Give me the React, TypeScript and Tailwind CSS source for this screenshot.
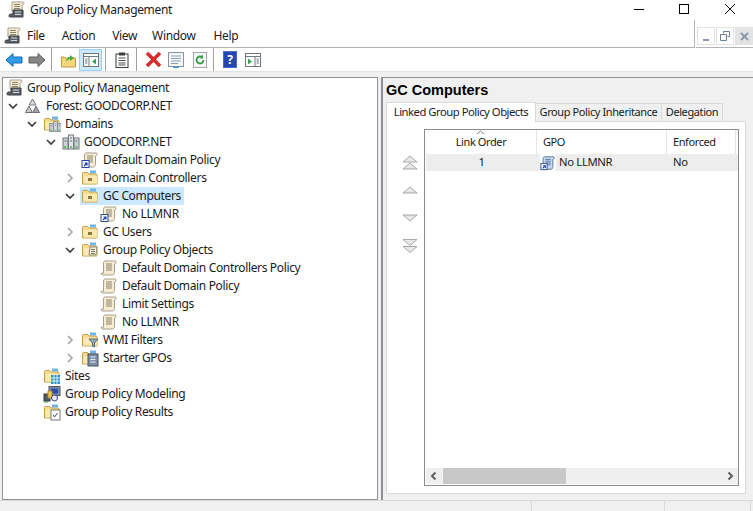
import React from "react";

const Scroll = ({ badge, dark, size = 18 }: { badge?: boolean; dark?: boolean; size?: number }) => (
  <svg width={size} height={size} viewBox="0 0 18 18" className="shrink-0">
    <path d="M5 2h10c1 0 1.500 .8 1 1.800L14.500 5v8.500c0 1-.8 2.500-2 2.500H3c-1.200 0-2-.8-2-1.800h2.500V4C3.500 3 4 2 5 2z" fill={dark ? "#c9d8ea" : "#f6ecd2"} stroke={dark ? "#4d6f9e" : "#a5a08c"} strokeWidth="1" />
    <path d="M6 5h6M6 7h6M6 9h6M6 11h6" stroke={dark ? "#4d6f9e" : "#8a846e"} strokeWidth="1" />
    {badge && <rect x="1" y="9.500" width="7" height="7" fill="#fff" stroke="#2d4a9a" />}
    {badge && <path d="M3 15l3-3M3.500 12H6v2.500" stroke="#1c3fa8" strokeWidth="1.200" fill="none" />}
  </svg>
);

const GpmIcon = () => (
  <svg width="18" height="18" viewBox="0 0 18 18" className="shrink-0">
    <path d="M4 1h11c1 0 1.200 1 .8 1.700L14 4v6H4z" fill="#f6ecd2" stroke="#a5a08c" />
    <path d="M6 3.500h6M6 5.500h6M6 7.500h6" stroke="#8a846e" />
    <path d="M1 15c0-1 .5-2 1.500-2H5V9h10v7H2.500C1.500 16 1 16 1 15z" fill="#5a6068" stroke="#3a3e44" />
    <path d="M7 11h6M7 13.500h6" stroke="#d8d8d8" />
  </svg>
);

const Forest = () => (
  <svg width="17" height="17" viewBox="0 0 17 17" className="shrink-0">
    <path d="M8.500 1L12 7H5z" fill="#dcdcdc" stroke="#77777a" />
    <path d="M5 8l3.300 6.500H1.500z" fill="#c9c9cc" stroke="#6e6e72" />
    <path d="M12 8l3.500 6.500H8.700z" fill="#a5a5a9" stroke="#6e6e72" />
  </svg>
);

const Folder = ({ children }: { children?: React.ReactNode }) => (
  <svg width="18" height="18" viewBox="0 0 18 18" className="shrink-0">
    <path d="M1.500 15V4.500c0-.6.400-1 1-1h4l1.500 1.500h7c.6 0 1 .4 1 1V15z" fill="#f6dc8c" stroke="#c49f4a" />
    <path d="M2.500 7h13.500v7.500H2.500z" fill="#fbeab0" />
    <rect x="9" y="1.500" width="6" height="3" fill="#6fb6e3" />
    {children}
  </svg>
);

const OuFolder = () => (
  <Folder>
    <rect x="7" y="9" width="4" height="3" fill="#8d7a3a" />
  </Folder>
);

const Servers = ({ small }: { small?: boolean }) => (
  <g transform={small ? "translate(6 5) scale(.72)" : ""}>
    <rect x="1" y="5" width="5" height="11" fill="#c9d2d6" stroke="#71797e" />
    <rect x="6.500" y="2" width="5" height="14" fill="#dfe5e8" stroke="#71797e" />
    <rect x="12" y="5" width="5" height="11" fill="#c9d2d6" stroke="#71797e" />
    <path d="M2.500 8h2M8 5h2M8 8h2M13.500 8h2" stroke="#5a6a74" />
    <path d="M2 14h2M8 14h2M13.500 14h2" stroke="#43b649" strokeWidth="1.500" />
  </g>
);

const DomainsIcon = () => (
  <Folder>
    <Servers small />
  </Folder>
);

const DomainIcon = () => (
  <svg width="18" height="18" viewBox="0 0 18 18" className="shrink-0">
    <Servers />
  </svg>
);

const GpoFolder = () => (
  <Folder>
    <path d="M9 6h7l-1 8H8z" fill="#f8f2dc" stroke="#8f8a78" />
    <path d="M10 8.500h4M10 10.500h4M10 12.500h3.500" stroke="#77705c" />
  </Folder>
);

const WmiIcon = () => (
  <Folder>
    <path d="M8 8h9l-3.500 4v4l-2-1v-3z" fill="#8fa6bb" stroke="#5a6c7c" />
  </Folder>
);

const StarterIcon = () => (
  <Folder>
    <rect x="7" y="5" width="10" height="12" fill="#7f8fa6" stroke="#44515f" />
    <path d="M9.500 8h5M9.500 10.500h5M9.500 13h5" stroke="#e8eef5" />
  </Folder>
);

const SitesIcon = () => (
  <Folder>
    <rect x="8" y="8" width="9" height="9" fill="#2c8fd0" />
    <path d="M8 11h9M8 14h9M11 8v9M14 8v9" stroke="#d8eefc" />
  </Folder>
);

const ModelingIcon = () => (
  <svg width="18" height="18" viewBox="0 0 18 18" className="shrink-0">
    <rect x="1" y="9" width="6" height="7" fill="#4f5a66" stroke="#333a42" />
    <rect x="6" y="1.500" width="11" height="9" fill="#7f8ea0" stroke="#4b5664" />
    <rect x="8" y="3.500" width="7" height="5" fill="#264fa8" />
    <path d="M5 6h4v7H5z" fill="#f0c85a" stroke="#b08a2c" />
    <circle cx="11.500" cy="13" r="3" fill="#e9e9ef" stroke="#36428a" />
    <path d="M1 17h4" stroke="#3ba24a" />
  </svg>
);

const ResultsIcon = () => (
  <Folder>
    <rect x="8" y="7" width="9" height="10" fill="#fff" stroke="#73787e" />
    <path d="M10 12l1.500 2 3-4" stroke="#3c4a5c" fill="none" />
  </Folder>
);

const Chevron = ({ state }: { state: "open" | "closed" | "none" }) => (
  <span className="w-[14px] h-[18px] flex items-center justify-center shrink-0">
    {state === "open" && (
      <svg width="10" height="7" viewBox="0 0 10 7">
        <path d="M1 1l4 4 4-4" stroke="#3d3d3d" strokeWidth="1.700" fill="none" />
      </svg>
    )}
    {state === "closed" && (
      <svg width="7" height="10" viewBox="0 0 7 10">
        <path d="M1 1l4 4-4 4" stroke="#a6a6a6" strokeWidth="1.700" fill="none" />
      </svg>
    )}
  </span>
);

type Node = {
  label: string;
  depth: number;
  state: "open" | "closed" | "none";
  icon: React.ReactNode;
  selected?: boolean;
};

const nodes: Node[] = [
  { label: "Forest: GOODCORP.NET", depth: 0, state: "open", icon: <Forest /> },
  { label: "Domains", depth: 1, state: "open", icon: <DomainsIcon /> },
  { label: "GOODCORP.NET", depth: 2, state: "open", icon: <DomainIcon /> },
  { label: "Default Domain Policy", depth: 3, state: "none", icon: <Scroll badge /> },
  { label: "Domain Controllers", depth: 3, state: "closed", icon: <OuFolder /> },
  { label: "GC Computers", depth: 3, state: "open", icon: <OuFolder />, selected: true },
  { label: "No LLMNR", depth: 4, state: "none", icon: <Scroll badge /> },
  { label: "GC Users", depth: 3, state: "closed", icon: <OuFolder /> },
  { label: "Group Policy Objects", depth: 3, state: "open", icon: <GpoFolder /> },
  { label: "Default Domain Controllers Policy", depth: 4, state: "none", icon: <Scroll /> },
  { label: "Default Domain Policy", depth: 4, state: "none", icon: <Scroll /> },
  { label: "Limit Settings", depth: 4, state: "none", icon: <Scroll /> },
  { label: "No LLMNR", depth: 4, state: "none", icon: <Scroll /> },
  { label: "WMI Filters", depth: 3, state: "closed", icon: <WmiIcon /> },
  { label: "Starter GPOs", depth: 3, state: "closed", icon: <StarterIcon /> },
  { label: "Sites", depth: 1, state: "none", icon: <SitesIcon /> },
  { label: "Group Policy Modeling", depth: 1, state: "none", icon: <ModelingIcon /> },
  { label: "Group Policy Results", depth: 1, state: "none", icon: <ResultsIcon /> },
];

const TreeRow = ({ node }: { node: Node }) => (
  <div className="h-[18px] flex items-center" style={{ paddingLeft: 3 + node.depth * 19 }}>
    <Chevron state={node.state} />
    <div className={`h-[18px] flex items-center pr-[3px] ml-[3px] ${node.selected ? "bg-[#cce8ff]" : ""}`}>
      <span className="w-[23px] pl-[1px] flex items-center shrink-0">{node.icon}</span>
      <span className="whitespace-nowrap">{node.label}</span>
    </div>
  </div>
);

const Sep = () => <div className="w-px h-[23px] bg-[#a0a0a0] shrink-0" />;

const MoveBtn = ({ d, extra }: { d: string; extra?: string }) => (
  <svg width="16" height="16" viewBox="0 0 16 16">
    <path d={d} fill="#e8e8e8" stroke="#a8a8a8" />
    {extra && <path d={extra} fill="#e8e8e8" stroke="#a8a8a8" />}
  </svg>
);

export default function App() {
  return (
    <div className="w-[753px] h-[511px] overflow-hidden bg-white flex flex-col text-[12px] text-[#1a1a1a] font-['Noto_Sans','Open_Sans',sans-serif] tracking-[-0.35px]">
      {/* Title bar */}
      <div className="h-[20px] flex items-center shrink-0 pl-[8px]">
        <GpmIcon />
        <span className="ml-[4px]">Group Policy Management</span>
        <svg width="102" height="14" viewBox="0 0 102 14" className="ml-auto mr-[17px] self-start mt-[1px]">
          <path d="M0 8.500h10" stroke="#000" />
          <rect x="45.500" y="3.500" width="9" height="9" fill="none" stroke="#000" />
          <path d="M91 3l10 10M101 3L91 13" stroke="#111" />
        </svg>
      </div>
      {/* Menu bar */}
      <div className="h-[28px] flex shrink-0">
        <div className="flex-1 flex items-center border-b border-[#b4b4b4] border-r h-[28px] pl-[4px] pt-[5px]">
          <GpmIcon />
          <span className="ml-[5px]">File</span>
          <span className="ml-[17px]">Action</span>
          <span className="ml-[17px]">View</span>
          <span className="ml-[15px]">Window</span>
          <span className="ml-[18px]">Help</span>
        </div>
        <div className="w-[57px] flex gap-px items-start pt-[7px] border-b border-[#b4b4b4] pl-[1px] ml-[1px]">
          <div className="w-[18px] h-[18px] border border-[#e2e2e2] flex items-end justify-center pb-[3px]">
            <div className="w-[6px] h-[2px] bg-[#8a99ab]" />
          </div>
          <div className="w-[18px] h-[18px] border border-[#e2e2e2] flex items-center justify-center">
            <svg width="10" height="10" viewBox="0 0 10 10">
              <path d="M3.500 2.500V.500h6v5h-2M.500 3.500h6v6h-6z" fill="none" stroke="#6d7f94" />
            </svg>
          </div>
          <div className="w-[18px] h-[18px] bg-[#e3e3e3] flex items-center justify-center">
            <svg width="9" height="9" viewBox="0 0 9 9">
              <path d="M1 1l7 7M8 1L1 8" stroke="#8a99ab" strokeWidth="2" />
            </svg>
          </div>
        </div>
      </div>
      {/* Toolbar */}
      <div className="h-[23px] flex items-center shrink-0 pl-[5px]">
        <svg width="18" height="16" viewBox="0 0 18 16" className="mr-[5px]">
          <path d="M1 8l7-6.500V5h9v6H8v3.500z" fill="#2f9be8" stroke="#1a6cb0" />
        </svg>
        <svg width="18" height="16" viewBox="0 0 18 16" className="mr-[5px]">
          <path d="M17 8l-7-6.500V5H1v6h9v3.500z" fill="#868686" stroke="#5f5f5f" />
        </svg>
        <Sep />
        <span className="w-[9px]" />
        <svg width="15" height="16" viewBox="0 0 15 16">
          <path d="M.500 15V5h3l1 1h10v9z" fill="#f4d77f" stroke="#c09a42" />
          <path d="M5 10c0-3 2-5 4-5V3l4 3-4 3V7c-1 0-3 1-4 3z" fill="#3fae49" />
        </svg>
        <span className="w-[3px]" />
        <div className="w-[23px] h-[22px] bg-[#cce8ff] border border-[#99d1ff] flex items-center justify-center shrink-0">
          <svg width="16" height="14" viewBox="0 0 16 14">
            <rect x=".5" y=".5" width="15" height="13" fill="#fff" stroke="#70787c" />
            <path d="M.5 3.500h15M6 3.500v10" stroke="#70787c" />
            <path d="M13 5.500v6l-4-3z" fill="#3aa24a" />
            <path d="M2 6h2.500M2 8h2.500M2 10h2.500" stroke="#70787c" />
          </svg>
        </div>
        <span className="w-[3px]" />
        <Sep />
        <span className="w-[9px]" />
        <svg width="14" height="16" viewBox="0 0 14 16">
          <rect x="1" y="2" width="12" height="13.500" fill="#fbfbfb" stroke="#3c3c3c" />
          <rect x="4" y="0.500" width="6" height="3" fill="#3c3c3c" />
          <path d="M3.500 6h7M3.500 8.500h7M3.500 11h7M3.500 13h7" stroke="#555" />
        </svg>
        <span className="w-[7px]" />
        <Sep />
        <span className="w-[8px]" />
        <svg width="17" height="17" viewBox="0 0 17 17">
          <path d="M2 2l13 13M15 2L2 15" stroke="#d92b2b" strokeWidth="3.600" />
        </svg>
        <span className="w-[6px]" />
        <svg width="16" height="16" viewBox="0 0 16 16">
          <rect x=".5" y=".5" width="15" height="14" fill="#f4f6f8" stroke="#8a9298" />
          <path d="M3 4h10M3 6.500h10M3 9h10M3 11.500h7" stroke="#8aa0b4" />
          <path d="M5 15.500h6" stroke="#2f9be8" />
        </svg>
        <span className="w-[9px]" />
        <svg width="14" height="16" viewBox="0 0 14 16">
          <rect x=".5" y=".5" width="13" height="15" fill="#f7f7f7" stroke="#a0a6aa" />
          <path d="M10.500 8a3.500 3.500 0 1 1-1.200-2.700" stroke="#2f9e44" strokeWidth="1.800" fill="none" />
          <path d="M10 2.500v4H6.500z" fill="#2f9e44" />
        </svg>
        <span className="w-[6px]" />
        <Sep />
        <span className="w-[9px]" />
        <div className="w-[14px] h-[17px] bg-[#2546b0] border border-[#4a6bd0] flex items-center justify-center">
          <span className="text-white font-bold text-[12px] leading-none tracking-normal">?</span>
        </div>
        <span className="w-[8px]" />
        <svg width="16" height="14" viewBox="0 0 16 14">
          <rect x=".5" y=".5" width="15" height="13" fill="#fff" stroke="#70787c" />
          <path d="M.5 3.500h15M10 3.500v10" stroke="#70787c" />
          <path d="M3 5.500v6l4-3z" fill="#3aa24a" />
          <path d="M11.500 6h2.500M11.500 8h2.500M11.500 10h2.500" stroke="#70787c" />
        </svg>
      </div>
      {/* Strip */}
      <div className="h-[6px] bg-[#f0f0f0] border-t border-[#e3e3e3] shrink-0" />
      {/* Main */}
      <div className="flex-1 flex min-h-0 bg-[#f0f0f0]">
        <div className="w-[376px] ml-[2px] border border-[#8f9296] bg-white pt-[1px] shrink-0">
          <div className="h-[18px] flex items-center pl-[3px]">
            <span className="w-[21px] flex items-center">
              <GpmIcon />
            </span>
            <span className="whitespace-nowrap">Group Policy Management</span>
          </div>
          {nodes.map((n, i) => (
            <TreeRow key={i} node={n} />
          ))}
        </div>
        <div className="flex-1 ml-[3px] border-l-2 border-t border-[#8f9296] flex flex-col pl-[3px] pr-[7px] min-w-0">
          <div className="h-[24px] flex items-center font-bold text-[14.500px] text-black tracking-[0px] shrink-0 pt-[1px] font-['Liberation_Sans',sans-serif]">
            GC Computers
          </div>
          <div className="flex h-[20px] items-end shrink-0 relative z-10 text-[11px] tracking-[-0.4px]">
            <div className="w-[150px] h-[20px] bg-white border border-b-0 border-[#d9d9d9] flex items-start pt-[1px] justify-center whitespace-nowrap text-[11.300px] tracking-[-0.5px]">
              Linked Group Policy Objects
            </div>
            <div className="w-[126px] h-[19px] bg-[#f0f0f0] border border-l-0 border-[#d9d9d9] flex items-center justify-center whitespace-nowrap">
              Group Policy Inheritance
            </div>
            <div className="w-[61px] h-[19px] bg-[#f0f0f0] border border-l-0 border-[#d9d9d9] flex items-center justify-center whitespace-nowrap">
              Delegation
            </div>
          </div>
          <div className="h-[373px] -mt-px bg-white border border-[#d9d9d9] flex pl-[8px] pr-[6px] pt-[7px] pb-[7px] shrink-0 text-[11.300px]">
            <div className="w-[29px] pt-[26px] flex flex-col items-center gap-[12px] shrink-0">
              <MoveBtn d="M8 1l7 6H1z" extra="M8 8l7 6H1z" />
              <MoveBtn d="M8 4l7 6H1z" />
              <MoveBtn d="M1 4h14L8 10z" />
              <MoveBtn d="M1 0.500h14L8 6.500z" extra="M1 7.500h14L8 13.500z" />
            </div>
            <div className="flex-1 border border-[#8a8a90] flex flex-col min-w-0 pl-[1px]">
              <div className="h-[24px] flex shrink-0 relative text-[11px] tracking-[-0.4px]">
                <div className="w-[111px] flex items-center justify-center border-r border-[#e5e5e5]">
                  Link Order
                </div>
                <svg width="9" height="5" viewBox="0 0 9 5" className="absolute left-[50px] top-0">
                  <path d="M1 4l3.500-3L8 4" stroke="#7a7a7a" fill="none" />
                </svg>
                <div className="w-[130px] flex items-center pl-[6px] border-r border-[#e5e5e5]">GPO</div>
                <div className="w-[69px] flex items-center pl-[6px] border-r border-[#e5e5e5]">Enforced</div>
              </div>
              <div className="h-[17px] bg-[#ededed] flex items-center shrink-0">
                <div className="w-[111px] text-center">1</div>
                <div className="w-[130px] h-[17px] flex items-center pl-[3px]">
                  <span className="w-[16px] h-[17px] flex items-center bg-white">
                    <Scroll badge dark size={16} />
                  </span>
                  <span className="ml-[3px]">No LLMNR</span>
                </div>
                <div className="pl-[6px]">No</div>
              </div>
              <div className="flex-1" />
              <div className="h-[16px] bg-[#efefef] flex items-center shrink-0 mb-px">
                <svg width="16" height="16" viewBox="0 0 16 16" className="shrink-0">
                  <path d="M9.500 4.500L6 8l3.500 3.500" stroke="#606060" strokeWidth="2" fill="none" />
                </svg>
                <div className="w-[123px] h-[16px] bg-[#c8c8c8] ml-[1px]" />
                <div className="flex-1" />
                <svg width="16" height="16" viewBox="0 0 16 16" className="shrink-0">
                  <path d="M6.500 4.500L10 8l-3.500 3.500" stroke="#606060" strokeWidth="2" fill="none" />
                </svg>
              </div>
            </div>
          </div>
        </div>
      </div>
      {/* Status bar */}
      <div className="h-[11px] bg-[#f0f0f0] border-t border-[#d9d9d9] flex shrink-0">
        <div className="w-[532px] border-r border-[#d9d9d9]" />
        <div className="w-[133px] border-r border-[#d9d9d9]" />
        <div className="w-[86px] border-r border-[#d9d9d9]" />
      </div>
    </div>
  );
}
